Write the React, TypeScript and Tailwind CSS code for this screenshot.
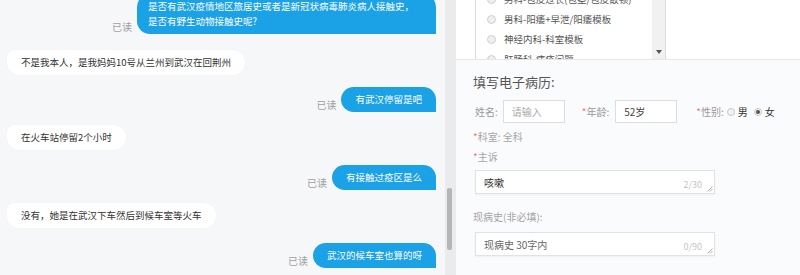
import React from "react";

const font = { fontFamily: '"Noto Sans CJK SC", "Noto Sans", sans-serif' };

function Read() {
  return <span className="text-[10px] leading-[12px] text-[#a0a0a0] mb-[1px]">已读</span>;
}

function Sent({ text, className, bubbleClass }: { text: string; className: string; bubbleClass?: string }) {
  return (
    <div className={"flex justify-end items-end gap-[5px] " + className}>
      <Read />
      <div
        className={
          "bg-[#1ba1e6] text-white text-[9.5px] leading-[15px] py-[5px] rounded-[13px] rounded-br-none " +
          (bubbleClass ?? "px-[14px] whitespace-nowrap")
        }
      >
        {text}
      </div>
    </div>
  );
}

function Recv({ text, className }: { text: string; className: string }) {
  return (
    <div className={"flex justify-start " + className}>
      <div className="bg-white text-[#333] text-[9.5px] leading-[15px] py-[5px] px-[14px] rounded-[12px] rounded-tl-[7px] whitespace-nowrap shadow-[0_0_2px_rgba(0,0,0,0.04)]">
        {text}
      </div>
    </div>
  );
}

function ListRadio() {
  return <span className="w-[9px] h-[9px] rounded-full border border-[#cfcfcf] bg-[#efefef] shrink-0" />;
}

function Star() {
  return <span className="text-[#f07878]">*</span>;
}

function Grip() {
  return (
    <svg className="absolute right-[1px] bottom-[1px]" width="7" height="7" viewBox="0 0 7 7">
      <path d="M6.5 1.5 L1.5 6.5 M6.5 4 L4 6.5" stroke="#999" strokeWidth="0.8" fill="none" />
    </svg>
  );
}

export default function App() {
  const items = [
    "男科-包皮过长(包茎/包皮嵌顿)",
    "男科-阳痿+早泄/阳痿模板",
    "神经内科-科室模板",
    "肛肠科-痔疮问题",
  ];
  return (
    <div className="w-[800px] h-[275px] flex overflow-hidden bg-[#f7f8fa]" style={font}>
      {/* chat */}
      <div className="w-[445px] h-full overflow-hidden flex flex-col pl-[7px] pr-[9px] bg-[#f6f7f9]">
        <Sent
          className="mt-[-6px]"
          text="是否有武汉疫情地区旅居史或者是新冠状病毒肺炎病人接触史，是否有野生动物接触史呢?"
          bubbleClass="w-[299px] pl-[11px] pr-[16px]"
        />
        <Recv className="mt-[16px]" text="不是我本人，是我妈妈10号从兰州到武汉在回荆州" />
        <Sent className="mt-[12px]" text="有武汉停留是吧" />
        <Recv className="mt-[13px]" text="在火车站停留2个小时" />
        <Sent className="mt-[15px]" text="有接触过疫区是么" />
        <Recv className="mt-[13px]" text="没有，她是在武汉下车然后到候车室等火车" />
        <Sent className="mt-[15px]" text="武汉的候车室也算的呀" />
      </div>

      {/* chat scrollbar */}
      <div className="w-[11px] h-full bg-[#ebebeb] flex flex-col pt-[188px]">
        <div className="ml-[2px] w-[5px] h-[62px] rounded-[2px] bg-[#b6b6b6]" />
      </div>

      {/* right panel */}
      <div className="flex-1 h-full flex flex-col bg-[#fafbfc]">
        <div className="h-[60px] shrink-0 bg-white border-b border-[#e6e6e6] pl-[19px] flex">
          <div className="w-[191px] h-full border-x border-[#dcdcdc] flex overflow-hidden">
            <div className="flex-1 flex flex-col mt-[-11px] pl-[11px]">
              {items.map((t) => (
                <div key={t} className="h-[20px] shrink-0 flex items-center gap-[8px] text-[9.5px] text-[#555] whitespace-nowrap">
                  <ListRadio />
                  <span>{t}</span>
                </div>
              ))}
            </div>
            <div className="w-[13px] h-full bg-[#f1f1f1] flex flex-col justify-end items-center pb-[5px]">
              <svg width="6" height="4" viewBox="0 0 6 4">
                <path d="M0 0 L6 0 L3 4 Z" fill="#555" />
              </svg>
            </div>
          </div>
        </div>

        <div className="flex flex-col pl-[17px]">
          <div className="mt-[14px] text-[13px] leading-[16px] text-[#555]">填写电子病历:</div>

          <div className="mt-[10px] ml-[2px] flex items-center text-[10px] text-[#999] h-[23px]">
            <span>姓名:</span>
            <div className="ml-[5px] w-[62px] h-[23px] bg-white border border-[#dedede] flex items-center pl-[8px] text-[#aaa]">
              请输入
            </div>
            <span className="ml-[17px]">
              <Star />年龄:
            </span>
            <div className="ml-[6px] w-[62px] h-[23px] bg-white border border-[#dedede] flex items-center pl-[8px] text-[#444]">
              52岁
            </div>
            <span className="ml-[19px]">
              <Star />性别:
            </span>
            <span className="ml-[3px] w-[8px] h-[8px] rounded-full border border-[#c8c8c8] bg-[#f2f2f2]" />
            <span className="ml-[3px] text-[#333]">男</span>
            <span className="ml-[6px] w-[8px] h-[8px] rounded-full border border-[#c8c8c8] bg-[#f2f2f2] flex items-center justify-center">
              <span className="w-[4px] h-[4px] rounded-full bg-[#555]" />
            </span>
            <span className="ml-[3px] text-[#333]">女</span>
          </div>

          <div className="mt-[7px] text-[10px] leading-[14px] text-[#a5a5a5]">
            <Star />科室: 全科
          </div>
          <div className="mt-[6px] text-[10px] leading-[14px] text-[#a5a5a5]">
            <Star />主诉
          </div>

          <div className="relative mt-[6px] ml-[2px] w-[240px] h-[24px] bg-white border border-[#e2e2e2] shadow-[0_1px_2px_rgba(0,0,0,0.05)] flex justify-between items-center pl-[8px] pr-[12px]">
            <span className="text-[10px] text-[#333]">咳嗽</span>
            <span className="self-end mb-[2px] text-[9px] leading-[12px] text-[#c4c4c4]">2/30</span>
            <Grip />
          </div>

          <div className="mt-[16px] text-[10px] leading-[14px] text-[#a5a5a5]">现病史(非必填):</div>

          <div className="relative mt-[8px] ml-[2px] w-[240px] h-[24px] bg-white border border-[#e2e2e2] shadow-[0_1px_2px_rgba(0,0,0,0.05)] flex justify-between items-center pl-[8px] pr-[12px]">
            <span className="text-[10px] text-[#666]">现病史 30字内</span>
            <span className="self-end mb-[2px] text-[9px] leading-[12px] text-[#c4c4c4]">0/90</span>
            <Grip />
          </div>
        </div>
      </div>
    </div>
  );
}
